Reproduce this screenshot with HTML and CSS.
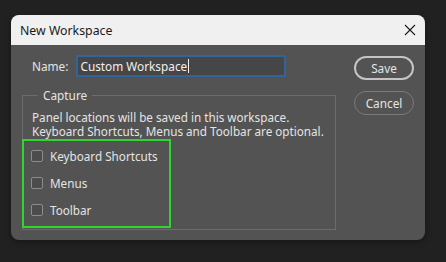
FILE: index.html
```html
<!DOCTYPE html>
<html lang="en">
<head>
    <meta charset="UTF-8">
    <title>New Workspace</title>
    <link rel="stylesheet" href="styles.css">
</head>
<body>
    <div class="dialog">
        <div class="dialog-header">
            <div class="dialog-title">New Workspace</div>
            <svg class="dialog-close" width="12" height="12" viewBox="0 0 12 12">
                <path d="M1 1 L11 11 M11 1 L1 11" stroke="#1b1b1b" stroke-width="1.1" fill="none"/>
            </svg>
        </div>

        <div class="dialog-body">
            <div class="dialog-main">
                <div class="name-row">
                    <label class="name-label">Name:</label>
                    <div class="name-input">Custom Workspace<span class="caret"></span></div>
                </div>

                <fieldset class="capture">
                    <legend>Capture</legend>
                    <p class="capture-note">Panel locations will be saved in this workspace.</p>
                    <p class="capture-note">Keyboard Shortcuts, Menus and Toolbar are optional.</p>
                    <div class="highlight">
                        <div class="check-row"><span class="check-box"></span>Keyboard Shortcuts</div>
                        <div class="check-row"><span class="check-box"></span>Menus</div>
                        <div class="check-row"><span class="check-box"></span>Toolbar</div>
                    </div>
                </fieldset>
            </div>

            <div class="dialog-buttons">
                <button class="btn btn-primary">Save</button>
                <button class="btn">Cancel</button>
            </div>
        </div>
    </div>
</body>
</html>
```

FILE: styles.css
```css
:root {
    --ps-panel: #535353;
    --ps-text: #e4e4e4;
    --ps-border: #6c6c6c;
    --ps-blue: #33639b;
    --ps-green: #31d531;
}

* {
    margin: 0;
    padding: 0;
    box-sizing: border-box;
    font-family: "Noto Sans", "Open Sans", sans-serif;
}

body {
    background-color: #212121;
    width: 446px;
    height: 262px;
    padding: 15px 0 0 11px;
}

.dialog {
    width: 414px;
    height: 225px;
    background: var(--ps-panel);
    border-radius: 8px;
    overflow: hidden;
    box-shadow: 0 2px 6px rgba(0, 0, 0, 0.35);
}

.dialog-header {
    height: 30px;
    background: #f0f0f0;
    display: flex;
    align-items: center;
    justify-content: space-between;
    padding: 0 9px 0 9px;
}

.dialog-title {
    font-size: 12.3px;
    color: #1a1a1a;
}

.dialog-close {
    display: block;
}

.dialog-body {
    display: flex;
    padding: 10px 11px 0 11px;
    gap: 18px;
}

.dialog-main {
    width: 314px;
}

.name-row {
    display: flex;
    align-items: center;
    padding-left: 10px;
    height: 22px;
    gap: 8px;
}

.name-label {
    font-size: 11.8px;
    color: var(--ps-text);
}

.name-input {
    width: 210px;
    height: 22px;
    background: #464646;
    border: 2px solid var(--ps-blue);
    font-size: 11.8px;
    color: #f0f0f0;
    padding-left: 2px;
    display: flex;
    align-items: center;
}

.caret {
    display: inline-block;
    width: 1px;
    height: 14px;
    background: #f0f0f0;
    margin-left: 1px;
}

.capture {
    margin-top: 10px;
    border: 1px solid var(--ps-border);
    padding: 0 0 0 9px;
    height: 143px;
}

.capture legend {
    font-size: 11.8px;
    line-height: 16px;
    color: var(--ps-text);
    margin-left: 6px;
    padding: 0 5px;
}

.capture-note {
    font-size: 11.7px;
    line-height: 14px;
    color: var(--ps-text);
}

.capture-note:first-of-type {
    margin-top: 7px;
}

.highlight {
    width: 149px;
    margin-left: -10px;
    margin-top: 1px;
    border: 2px solid var(--ps-green);
    padding: 1px 0 3px 7px;
}

.check-row {
    height: 27px;
    display: flex;
    align-items: center;
    gap: 7px;
    font-size: 11.7px;
    color: var(--ps-text);
}

.check-box {
    width: 12px;
    height: 12px;
    border: 1px solid #8c8c8c;
    border-radius: 2px;
    background: #4c4c4c;
}

.dialog-buttons {
    display: flex;
    flex-direction: column;
    gap: 11px;
    padding-top: 1px;
}

.btn {
    width: 60px;
    height: 24px;
    border-radius: 12px;
    border: 1px solid #7b7b7b;
    background: transparent;
    color: var(--ps-text);
    font-size: 11.8px;
}

.btn-primary {
    border: 2px solid #c4c4c4;
}
```
